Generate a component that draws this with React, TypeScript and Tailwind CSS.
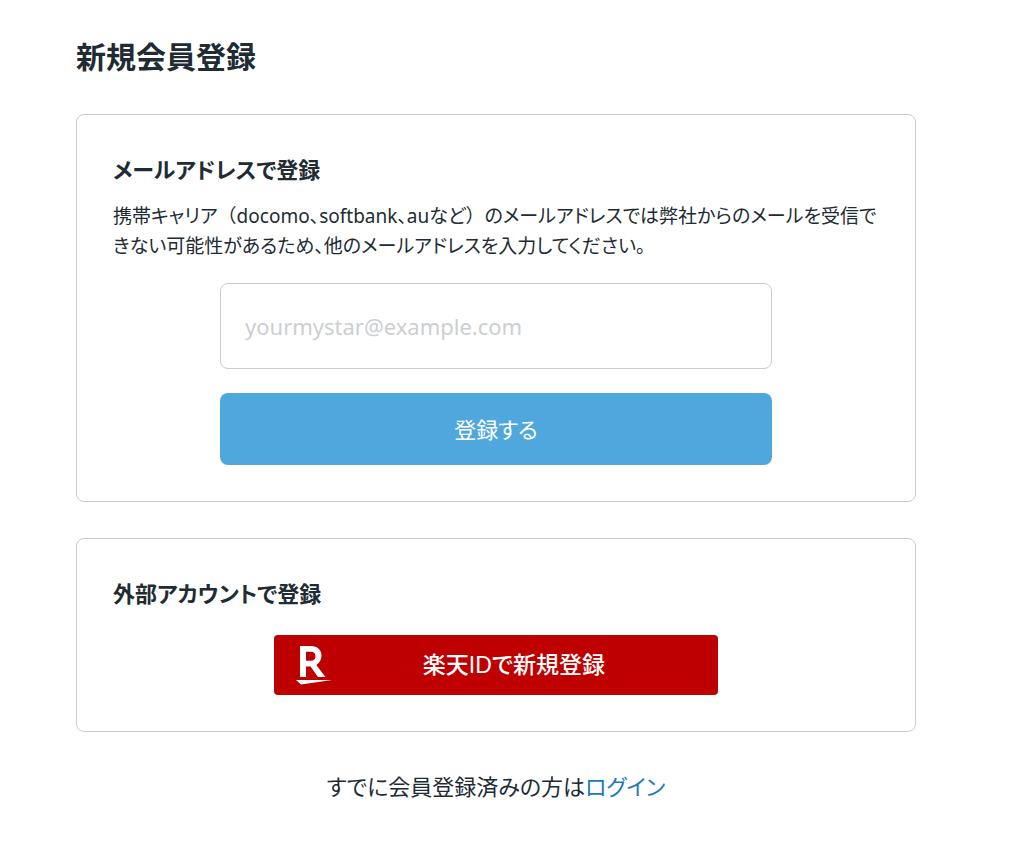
import { useState } from "react";

function RakutenLogo() {
  return (
    <svg viewBox="0 0 36 40" className="h-10 w-9 shrink-0" fill="currentColor" aria-hidden="true">
      <path
        fillRule="evenodd"
        d="M4 1H15C21.500 1 25.500 5 25.500 10.800C25.500 14.800 23.500 18 20.300 20L29.500 32H22L14.500 21.500H10V32H4ZM10 6.800V15.800H15C18 15.800 19.500 13.800 19.500 11.300C19.500 8.800 18 6.800 15 6.800Z"
      />
      <path d="M0 35H36L5 39.500Z" />
    </svg>
  );
}

export default function App() {
  const [email, setEmail] = useState("");

  return (
    <main
      lang="ja"
      className="bg-white pt-9 pr-[106px] pb-16 pl-[76px] font-['Noto_Sans','Noto_Sans_CJK_JP',sans-serif] text-[#212b33] [font-feature-settings:'palt']"
    >
      <h1 className="text-3xl leading-[42px] font-bold">新規会員登録</h1>

      <section className="mt-9 rounded-lg border border-[#cccccc] p-9">
        <h2 className="text-[22px] leading-9 font-bold">メールアドレスで登録</h2>
        {/* brackets keep their full width, the kana around them are proportional */}
        <p className="mt-[14px] text-[19px] leading-[30px]">
          携帯キャリア<span className="[font-feature-settings:normal]">（</span>
          docomo、softbank、auなど<span className="[font-feature-settings:normal]">）</span>
          のメールアドレスでは弊社からのメールを受信できない可能性があるため、他のメールアドレスを入力してください。
        </p>
        <form
          className="mx-auto mt-[22px] flex max-w-[552px] flex-col gap-6"
          onSubmit={(e) => e.preventDefault()}
        >
          <input
            type="email"
            aria-label="メールアドレス"
            className="h-[86px] w-full rounded-lg border border-[#cccccc] px-6 text-[22px] placeholder:text-[#cccfd1]"
            placeholder="yourmystar@example.com"
            value={email}
            onChange={(e) => setEmail(e.target.value)}
          />
          <button type="submit" className="h-[72px] w-full rounded-lg bg-[#50a7dd] text-[22px] text-white">
            登録する
          </button>
        </form>
      </section>

      <section className="mt-9 rounded-lg border border-[#cccccc] p-9">
        <h2 className="text-[22px] leading-9 font-bold">外部アカウントで登録</h2>
        <button
          type="button"
          className="mx-auto mt-6 flex h-[60px] w-full max-w-[444px] items-center rounded bg-[#bf0000] px-[22px] text-white"
        >
          <RakutenLogo />
          <span className="flex-1 text-center font-['Liberation_Sans','Noto_Sans_CJK_JP',sans-serif] text-[23px] font-medium">
            楽天IDで新規登録
          </span>
        </button>
      </section>

      <p className="mt-9 text-center text-[22px] leading-9">
        すでに会員登録済みの方は
        <a href="#login" className="text-[#1d79b8]">
          ログイン
        </a>
      </p>
    </main>
  );
}
